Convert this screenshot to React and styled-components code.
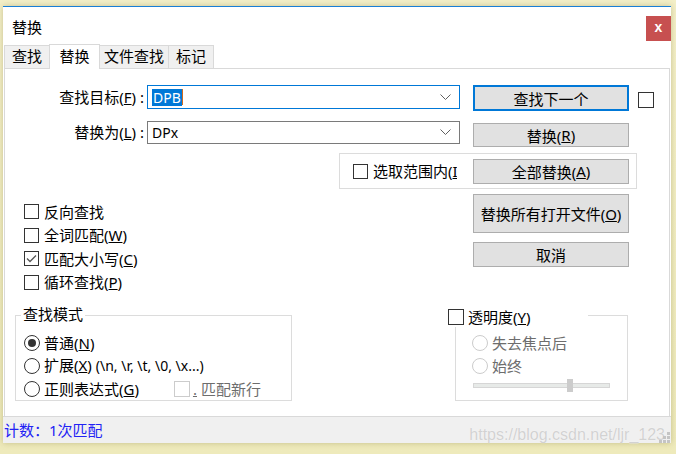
import React from 'react';
import styled, { createGlobalStyle } from 'styled-components';

const GlobalStyle = createGlobalStyle`
  html, body {
    margin: 0;
    padding: 0;
  }
  body {
    width: 676px;
    height: 454px;
    overflow: hidden;
    background: linear-gradient(180deg, #f3efc8 0%, #eeeabb 100%);
    font-family: "Noto Sans", "Noto Sans CJK SC", sans-serif;
  }
  #root {
    padding-top: 6px;
    padding-left: 3px;
  }
`;

const App = () => {
  return (
    <>
      <GlobalStyle />
      <Window>
        <TitleBar>
          <Title>替换</Title>
          <CloseButton>x</CloseButton>
        </TitleBar>

        <TabStrip>
          <Tab $w={46}>查找</Tab>
          <Tab $w={51} $active>替换</Tab>
          <Tab $w={70}>文件查找</Tab>
          <Tab $w={46}>标记</Tab>
        </TabStrip>

        <Panel>
          <FieldRow>
            <FieldLabel $h={24}>查找目标(<u>F</u>) :</FieldLabel>
            <Combo $h={24} $focused>
              <Selected>DPB</Selected>
              <Caret />
              <Chevron />
            </Combo>
            <Button $h={26} $default>查找下一个</Button>
            <Box $size={16} $mt={7} $ml={9} />
          </FieldRow>

          <FieldRow $mt={10}>
            <FieldLabel $h={23}>替换为(<u>L</u>) :</FieldLabel>
            <Combo $h={23}>
              <ComboText>DPx</ComboText>
              <Chevron />
            </Combo>
            <Button $h={24} $mt={2}>替换(<u>R</u>)</Button>
          </FieldRow>

          <RangeGroup>
            <RangeCheck>
              <Box $size={15} />
              <Clipped>选取范围内(<u>I</u>)</Clipped>
            </RangeCheck>
            <Button $h={25}>全部替换(<u>A</u>)</Button>
          </RangeGroup>

          <Middle>
            <CheckList>
              <CheckRow><Box $size={15} /><Text>反向查找</Text></CheckRow>
              <CheckRow><Box $size={15} /><Text>全词匹配(<u>W</u>)</Text></CheckRow>
              <CheckRow><Box $size={15}><Tick /></Box><Text>匹配大小写(<u>C</u>)</Text></CheckRow>
              <CheckRow><Box $size={15} /><Text>循环查找(<u>P</u>)</Text></CheckRow>
            </CheckList>
            <ButtonStack>
              <Button $h={39}>替换所有打开文件(<u>O</u>)</Button>
              <Button $h={25}>取消</Button>
            </ButtonStack>
          </Middle>

          <Bottom>
            <Frame $w={277} $ml={10} $pl={8}>
              <FrameLegend $left={5}>查找模式</FrameLegend>
              <RadioRow><Radio $checked /><Text>普通(<u>N</u>)</Text></RadioRow>
              <RadioRow>
                <Radio />
                <Text>扩展(<u>X</u>) <Latin>(\n, \r, \t, \0, \x...)</Latin></Text>
              </RadioRow>
              <RadioRow>
                <Radio />
                <Text>正则表达式(<u>G</u>)</Text>
                <DisabledCheck>
                  <Box $size={16} $disabled />
                  <Text><u>.</u>&nbsp;匹配新行</Text>
                </DisabledCheck>
              </RadioRow>
            </Frame>

            <Frame $w={173} $ml={163} $pl={16}>
              <CheckLegend>
                <Box $size={16} />
                <Text>透明度(<u>Y</u>)</Text>
              </CheckLegend>
              <RadioRow $disabled><Radio $disabled /><Text>失去焦点后</Text></RadioRow>
              <RadioRow $disabled><Radio $disabled /><Text>始终</Text></RadioRow>
              <Slider>
                <Track />
                <Thumb />
              </Slider>
            </Frame>
          </Bottom>
        </Panel>

        <StatusBar>
          <Count>计数：1次匹配</Count>
          <Watermark>https://blog.csdn.net/ljr_123</Watermark>
          <Grip />
        </StatusBar>
      </Window>
    </>
  );
};

export default App;

const Chevron = () => (
  <ChevronWrap>
    <svg width="11" height="7" viewBox="0 0 11 7">
      <polyline points="0.5,0.5 5.5,5.5 10.5,0.5" fill="none" stroke="#606060" strokeWidth="1" />
    </svg>
  </ChevronWrap>
);

const Tick = () => (
  <svg width="11" height="9" viewBox="0 0 11 9">
    <polyline points="1,4.5 4,7.5 10,1.5" fill="none" stroke="#555" strokeWidth="1.3" />
  </svg>
);

const Grip = () => (
  <GripWrap>
    <svg width="11" height="11" viewBox="0 0 11 11">
      <rect x="8" y="0" width="3" height="3" fill="#c4c4c4" />
      <rect x="4" y="4" width="3" height="3" fill="#c4c4c4" />
      <rect x="8" y="4" width="3" height="3" fill="#c4c4c4" />
      <rect x="0" y="8" width="3" height="3" fill="#c4c4c4" />
      <rect x="4" y="8" width="3" height="3" fill="#c4c4c4" />
      <rect x="8" y="8" width="3" height="3" fill="#c4c4c4" />
    </svg>
  </GripWrap>
);

const Window = styled.div`
  position: relative;
  width: 668px;
  height: 437px;
  box-sizing: border-box;
  background: #fff;
  border-top: 1px solid #1a7fd5;
  box-shadow: 0 0 6px rgba(120, 110, 40, 0.35);
  display: flex;
  flex-direction: column;
  color: #000;
  font-size: 15px;
`;

const TitleBar = styled.div`
  height: 37px;
  display: flex;
  align-items: flex-start;
  flex-shrink: 0;
`;

const Title = styled.div`
  margin: 10px 0 0 9px;
  line-height: 20px;
  font-size: 15px;
`;

const CloseButton = styled.div`
  margin: 9px 0 0 auto;
  width: 25px;
  height: 25px;
  background: #c75050;
  color: #fff;
  font-family: "Liberation Sans", sans-serif;
  font-weight: bold;
  font-size: 14px;
  line-height: 22px;
  text-align: center;
`;

const TabStrip = styled.div`
  height: 24px;
  display: flex;
  align-items: flex-end;
  padding-left: 2px;
  flex-shrink: 0;
  position: relative;
  z-index: 1;
`;

const Tab = styled.div`
  box-sizing: border-box;
  width: ${p => p.$w}px;
  height: ${p => (p.$active ? 25 : 23)}px;
  margin-bottom: ${p => (p.$active ? -1 : 0)}px;
  border: 1px solid #d9d9d9;
  border-bottom: 0;
  margin-left: -1px;
  background: ${p => (p.$active ? '#fff' : '#f0f0f0')};
  text-align: center;
  line-height: ${p => (p.$active ? 22 : 21)}px;
  font-size: 15px;
  position: relative;
  z-index: ${p => (p.$active ? 2 : 1)};
`;

const Panel = styled.div`
  flex: 1;
  margin: 0 1px;
  border: 1px solid #d9d9d9;
  border-bottom: 0;
  padding-top: 16px;
  box-sizing: border-box;
`;

const FieldRow = styled.div`
  display: flex;
  align-items: flex-start;
  margin-top: ${p => p.$mt || 0}px;
`;

const FieldLabel = styled.div`
  width: 139px;
  height: ${p => p.$h}px;
  line-height: ${p => p.$h}px;
  text-align: right;
  white-space: nowrap;
  font-size: 15px;
`;

const Combo = styled.div`
  margin-left: 3px;
  width: 313px;
  height: ${p => p.$h}px;
  box-sizing: border-box;
  border: 1px solid ${p => (p.$focused ? '#0078d7' : '#7a7a7a')};
  display: flex;
  align-items: center;
  padding-left: 4px;
  margin-right: 13px;
  font-family: "Noto Sans", sans-serif;
  font-size: 14px;
`;

const ComboText = styled.span`
  line-height: 17px;
`;

const Selected = styled.span`
  background: #0078d7;
  color: #fff;
  line-height: 17px;
  padding: 0 1px;
`;

const Caret = styled.span`
  width: 1px;
  height: 16px;
  background: #d36a1c;
`;

const ChevronWrap = styled.span`
  margin-left: auto;
  margin-right: 8px;
  display: flex;
  align-items: center;
`;

const Button = styled.div`
  width: 156px;
  height: ${p => p.$h}px;
  margin-top: ${p => p.$mt || 0}px;
  box-sizing: border-box;
  background: #e1e1e1;
  border: ${p => (p.$default ? '2px solid #0078d7' : '1px solid #adadad')};
  display: flex;
  align-items: center;
  justify-content: center;
  font-size: 15px;
  white-space: nowrap;
  flex-shrink: 0;
`;

const Box = styled.span`
  width: ${p => p.$size}px;
  height: ${p => p.$size}px;
  margin-top: ${p => p.$mt || 0}px;
  margin-left: ${p => p.$ml || 0}px;
  box-sizing: border-box;
  border: 1px solid ${p => (p.$disabled ? '#cccccc' : '#333333')};
  background: #fff;
  display: inline-flex;
  align-items: center;
  justify-content: center;
  flex-shrink: 0;
`;

const Text = styled.span`
  white-space: nowrap;
  line-height: 20px;
`;

const RangeGroup = styled.div`
  margin: 6px 0 0 334px;
  width: 298px;
  height: 36px;
  box-sizing: border-box;
  border: 1px solid #dcdcdc;
  display: flex;
  align-items: center;
  padding: 0 0 0 13px;
`;

const RangeCheck = styled.div`
  width: 120px;
  display: flex;
  align-items: center;
  gap: 5px;
`;

const Clipped = styled.span`
  width: 84px;
  overflow: hidden;
  white-space: nowrap;
  line-height: 20px;
`;

const Middle = styled.div`
  display: grid;
  grid-template-columns: 468px 156px;
`;

const CheckList = styled.div`
  padding: 11px 0 0 19px;
  display: flex;
  flex-direction: column;
`;

const CheckRow = styled.div`
  height: 23.5px;
  display: flex;
  align-items: center;
  gap: 5px;
`;

const ButtonStack = styled.div`
  padding-top: 5px;
  display: flex;
  flex-direction: column;
  gap: 9px;
`;

const Bottom = styled.div`
  display: flex;
  margin-top: 21px;
`;

const Frame = styled.div`
  position: relative;
  width: ${p => p.$w}px;
  height: 86px;
  margin-left: ${p => p.$ml}px;
  box-sizing: border-box;
  border: 1px solid #dcdcdc;
  padding: 15px 0 0 ${p => p.$pl}px;
`;

const FrameLegend = styled.div`
  position: absolute;
  top: -11px;
  left: ${p => p.$left}px;
  padding: 0 2px;
  background: #fff;
  line-height: 18px;
`;

const CheckLegend = styled.div`
  position: absolute;
  top: -10px;
  left: -8px;
  width: 140px;
  height: 21px;
  background: #fff;
  display: flex;
  align-items: center;
  gap: 4px;
`;

const RadioRow = styled.div`
  height: 23px;
  display: flex;
  align-items: center;
  gap: 4px;
  color: ${p => (p.$disabled ? '#6d6d6d' : '#000')};
`;

const Radio = styled.span`
  width: 16px;
  height: 16px;
  box-sizing: border-box;
  border-radius: 50%;
  border: 1px solid ${p => (p.$disabled ? '#cccccc' : '#333333')};
  background: #fff;
  display: inline-flex;
  align-items: center;
  justify-content: center;
  flex-shrink: 0;

  &::after {
    content: '';
    display: ${p => (p.$checked ? 'block' : 'none')};
    width: 8px;
    height: 8px;
    border-radius: 50%;
    background: #333;
  }
`;

const Latin = styled.span`
  font-family: "Noto Sans", sans-serif;
  font-size: 14px;
`;

const DisabledCheck = styled.span`
  margin-left: 31px;
  display: inline-flex;
  align-items: center;
  gap: 3px;
  color: #6d6d6d;
`;

const Slider = styled.div`
  position: relative;
  margin: 2px 0 0 1px;
  width: 137px;
  height: 13px;
  display: flex;
  align-items: center;
`;

const Track = styled.div`
  width: 100%;
  height: 5px;
  box-sizing: border-box;
  background: #e7eae8;
  border: 1px solid #d6d6d6;
`;

const Thumb = styled.div`
  position: absolute;
  left: 94px;
  top: 0;
  width: 6px;
  height: 13px;
  background: #cccccc;
`;

const StatusBar = styled.div`
  position: relative;
  height: 27px;
  flex-shrink: 0;
  box-sizing: border-box;
  background: #f0f0f0;
  border-top: 1px solid #d9d9d9;
  display: flex;
  align-items: center;
  padding-left: 1px;
`;

const Count = styled.span`
  color: #2222f5;
  font-size: 15px;
  line-height: 20px;
`;

const Watermark = styled.span`
  position: absolute;
  top: 10px;
  right: 6px;
  font-family: "Liberation Sans", sans-serif;
  font-size: 16px;
  line-height: 16px;
  color: #d2d2d2;
  text-shadow: 0 0 1px #fff;
  white-space: nowrap;
`;

const GripWrap = styled.span`
  position: absolute;
  right: 1px;
  bottom: 0;
  display: flex;
`;
